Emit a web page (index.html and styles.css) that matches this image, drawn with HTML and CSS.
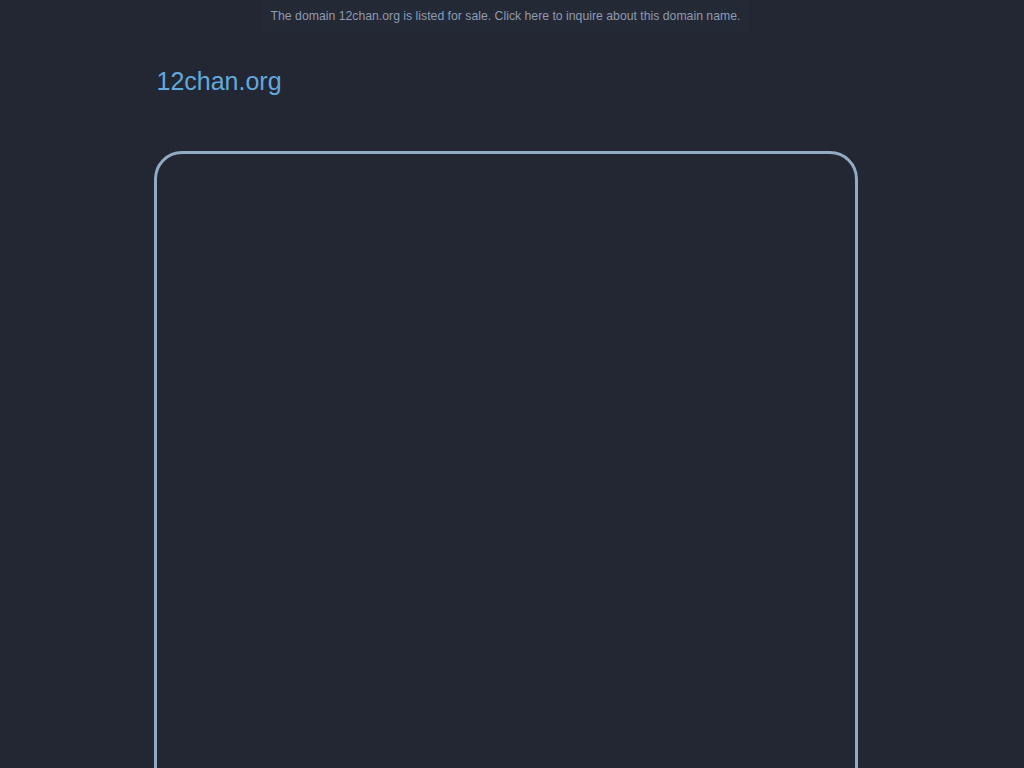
FILE: index.html
```html
<!DOCTYPE html>
<html lang="en">
<head>
<meta charset="utf-8">
<title>12chan.org</title>
<link rel="stylesheet" href="styles.css">
</head>
<body>
<div class="page">
  <div class="banner-row">
    <a class="banner" href="#">The domain 12chan.org is listed for sale. Click here to inquire about this domain name.</a>
  </div>
  <main class="container">
    <h1 class="title">12chan.org</h1>
    <div class="frame"></div>
  </main>
</div>
</body>
</html>
```

FILE: styles.css
```css
html, body {
  margin: 0;
  padding: 0;
  background: #222733;
}
body {
  font-family: "Liberation Sans", Arial, sans-serif;
}
.page {
  margin-right: 13px;
}
.banner-row {
  display: flex;
  justify-content: center;
}
.banner {
  display: block;
  padding: 8px 10px;
  font-size: 12.25px;
  line-height: 16px;
  color: #8f9bb1;
  text-decoration: none;
  background: #232935;
}
.container {
  width: 704px;
  margin: 0 auto;
}
.title {
  margin: 35px 0 0 3px;
  font-size: 25px;
  font-weight: normal;
  line-height: 28px;
  color: #62a9dc;
}
.frame {
  margin-top: 56px;
  height: 700px;
  border: 3px solid #93abc2;
  border-radius: 28px;
  margin-bottom: 40px;
}
```
